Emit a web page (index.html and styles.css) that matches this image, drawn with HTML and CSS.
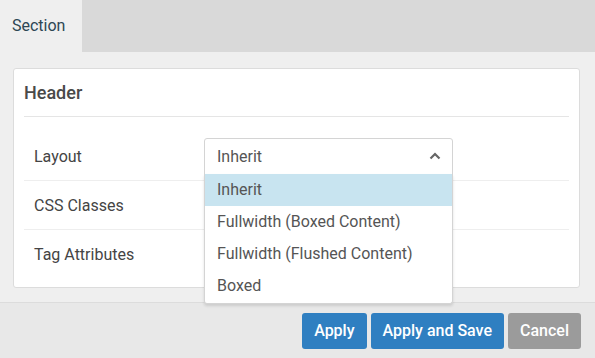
FILE: index.html
```html
<html>

<head>
  <meta charset="utf8">
  <title>Section settings</title>
  <link rel="stylesheet" href="styles.css">
</head>

<body>
  <div class="tabs">
    <div class="tab active">Section</div>
  </div>
  <section class="content">
    <div class="card">
      <div class="card-title">Header</div>
      <div class="rows">
        <div class="row">
          <div class="label">Layout</div>
          <div class="select open">
            <div class="select-value">
              <span>Inherit</span>
              <svg class="chevron" width="12" height="8" viewBox="0 0 12 8">
                <path d="M1.5 6.5 L6 2 L10.5 6.5" fill="none" stroke="#666" stroke-width="2.2"/>
              </svg>
            </div>
            <ul class="options">
              <li class="selected">Inherit</li>
              <li>Fullwidth (Boxed Content)</li>
              <li>Fullwidth (Flushed Content)</li>
              <li>Boxed</li>
            </ul>
          </div>
        </div>
        <div class="row">
          <div class="label">CSS Classes</div>
        </div>
        <div class="row">
          <div class="label">Tag Attributes</div>
        </div>
      </div>
    </div>
  </section>
  <div class="footer">
    <button class="btn primary">Apply</button>
    <button class="btn primary">Apply and Save</button>
    <button class="btn muted">Cancel</button>
  </div>
</body>

</html>
```

FILE: styles.css
```css
* {
  margin: 0;
  padding: 0;
  box-sizing: border-box;
}

body {
  font-family: Roboto, "Liberation Sans", sans-serif;
  font-size: 16px;
  color: #444;
  background: #efefef;
  width: 595px;
  height: 358px;
  overflow: hidden;
}

.tabs {
  height: 52px;
  background: #d9d9d9;
  display: flex;
}

.tab {
  width: 82px;
  padding-left: 12px;
  line-height: 52px;
  color: #2d4654;
}

.tab.active {
  background: #efefef;
}

.content {
  height: 250px;
  padding: 16px 15px 0 13px;
}

.card {
  background: #fff;
  border: 1px solid #dcdcdc;
  border-radius: 3px;
  height: 220px;
  padding: 0 10px 0 10px;
}

.card-title {
  font-size: 18px;
  font-weight: 500;
  color: #4a4a4a;
  height: 48px;
  line-height: 48px;
  border-bottom: 1px solid #e5e5e5;
}

.rows {
  margin-top: 15px;
}

.row {
  display: flex;
  align-items: center;
  height: 49px;
  padding-left: 10px;
  border-bottom: 1px solid #eee;
}

.row:last-child {
  border-bottom: none;
}

.label {
  width: 170px;
}

.select {
  position: relative;
  width: 249px;
}

.select-value {
  height: 37px;
  border: 1px solid #d4d4d4;
  border-radius: 3px 3px 0 0;
  padding: 0 11px 0 12px;
  display: flex;
  align-items: center;
  justify-content: space-between;
  color: #555;
}

.options {
  list-style: none;
  position: absolute;
  left: 0;
  right: 0;
  top: 36px;
  background: #fff;
  border: 1px solid #d4d4d4;
  border-top: none;
  border-radius: 0 0 3px 3px;
  box-shadow: 0 2px 3px rgba(0, 0, 0, 0.12);
  z-index: 2;
}

.options li {
  height: 32.3px;
  line-height: 32px;
  padding-left: 12px;
  color: #555;
}

.options li.selected {
  background: #c8e4f0;
}

.footer {
  height: 56px;
  background: #e8e8e8;
  border-top: 1px solid #dcdcdc;
  display: flex;
  justify-content: flex-end;
  align-items: center;
  gap: 4px;
  padding: 0 14px 0 0;
}

.btn {
  font-family: Roboto, "Liberation Sans", sans-serif;
  font-size: 16px;
  font-weight: 500;
  color: #fff;
  height: 36px;
  padding: 0 12px;
  border: none;
  border-radius: 3px;
}

.btn.primary {
  background: #2f7fc1;
}

.btn.muted {
  background: #9b9b9b;
}
```
